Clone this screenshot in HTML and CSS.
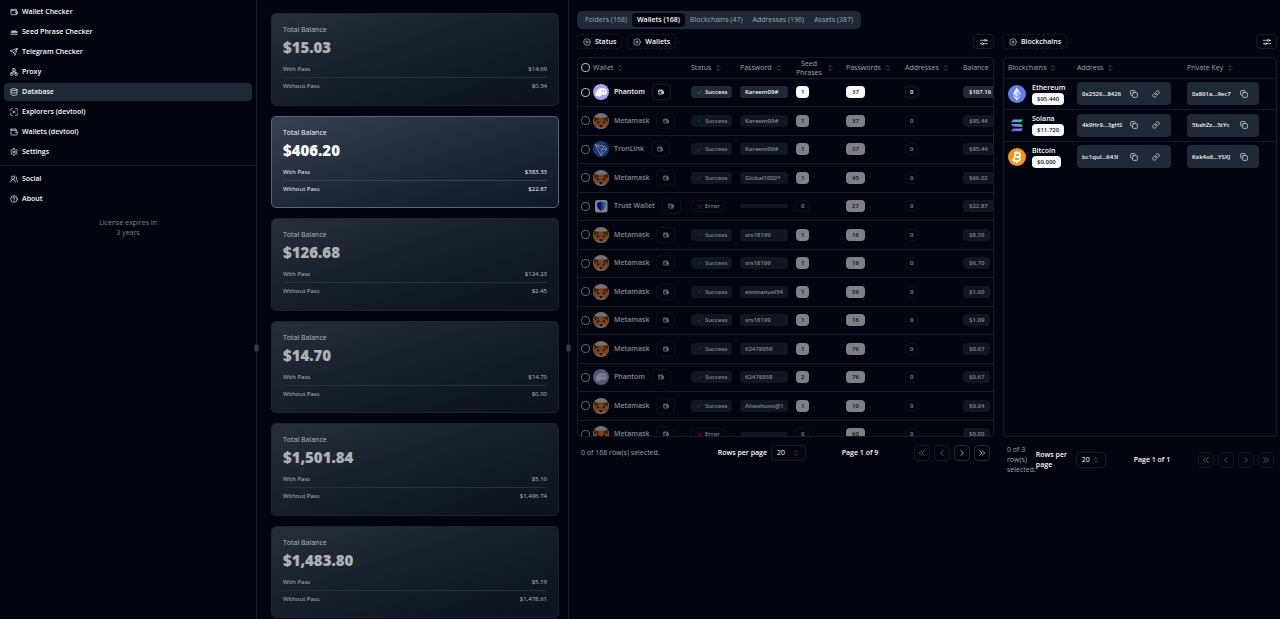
FILE: index.html
```html
<!DOCTYPE html>
<html lang="en">
<head>
<meta charset="utf-8">
<title>Database</title>
<link rel="stylesheet" href="styles.css">
</head>
<body>
<svg class="sprite" aria-hidden="true">
  <defs>
    <linearGradient id="sol-gradient" gradientUnits="userSpaceOnUse" x1="6" y1="25" x2="26" y2="6">
      <stop offset="0" stop-color="#9945ff"/><stop offset=".5" stop-color="#6a8df0"/><stop offset="1" stop-color="#14f195"/>
    </linearGradient>
  </defs>
  <symbol id="i-wallet" viewBox="0 0 24 24"><path d="M19 7V4H5a2 2 0 0 0 0 4h15v4M3 6v12a2 2 0 0 0 2 2h15v-4M22 12h-4a2 2 0 0 0 0 4h4z"/></symbol>
  <symbol id="i-wallet-box" viewBox="0 0 24 24"><path d="M3 5a2 2 0 0 1 2-2h13v4M3 5a2 2 0 0 0 2 2h14a2 2 0 0 1 2 2v10a2 2 0 0 1-2 2H5a2 2 0 0 1-2-2zM16 13h5"/></symbol>
  <symbol id="i-wallet-small" viewBox="0 0 24 24"><path d="M18 8V4H3v16h18V8H3M16 12h5v4h-5z"/></symbol>
  <symbol id="i-seed" viewBox="0 0 24 24"><path d="M2 19h20"/><circle cx="5" cy="12" r="2.5"/><circle cx="12" cy="11" r="2.5"/><circle cx="19" cy="12" r="2.5"/><path d="M9 15V8M15 15V7"/></symbol>
  <symbol id="i-send" viewBox="0 0 24 24"><path d="M22 2 15 22l-4-9-9-4zM22 2 11 13"/></symbol>
  <symbol id="i-network" viewBox="0 0 24 24"><rect x="2" y="15" width="7" height="7" rx="1"/><rect x="15" y="15" width="7" height="7" rx="1"/><rect x="8.5" y="2" width="7" height="7" rx="1"/><path d="M12 9v3M5.500 15v-3h13v3"/></symbol>
  <symbol id="i-database" viewBox="0 0 24 24"><ellipse cx="12" cy="5" rx="9" ry="3"/><path d="M3 5v14c0 1.700 4 3 9 3s9-1.300 9-3V5M3 12c0 1.700 4 3 9 3s9-1.300 9-3"/></symbol>
  <symbol id="i-scan" viewBox="0 0 24 24"><path d="M2 7V4a2 2 0 0 1 2-2h3M17 2h3a2 2 0 0 1 2 2v3M22 17v3a2 2 0 0 1-2 2h-3M7 22H4a2 2 0 0 1-2-2v-3M9 9l6 6M15 9l-6 6"/></symbol>
  <symbol id="i-gear" viewBox="0 0 24 24"><path d="M10 2h4l.7 3 2 1.200 3-.9 2 3.400L19.500 11v2l2.200 2.300-2 3.400-3-.9-2 1.200-.7 3h-4l-.7-3-2-1.200-3 .9-2-3.400L4.500 13v-2L2.300 8.700l2-3.400 3 .9 2-1.200z"/><circle cx="12" cy="12" r="3"/></symbol>
  <symbol id="i-users" viewBox="0 0 24 24"><path d="M1.500 21a7.500 7.500 0 0 1 15 0M22.500 20c0-3.400-2-6.500-4.500-8a5 5 0 0 0-.5-8.500"/><circle cx="9" cy="8" r="5"/></symbol>
  <symbol id="i-help" viewBox="0 0 24 24"><circle cx="12" cy="12" r="10"/><path d="M9 9a3 3 0 0 1 6 0c0 2-3 2.500-3 4.500M12 17v.5"/></symbol>
  <symbol id="i-plus" viewBox="0 0 24 24"><circle cx="12" cy="12" r="10"/><path d="M8 12h8M12 8v8"/></symbol>
  <symbol id="i-sliders" viewBox="0 0 24 24"><path d="M1 7h12M19 7h4M1 17h4M11 17h12"/><circle cx="16" cy="7" r="3"/><circle cx="8" cy="17" r="3"/></symbol>
  <symbol id="i-sort" viewBox="0 0 24 24"><path d="m6 8 6-6 6 6M6 16l6 6 6-6"/></symbol>
  <symbol id="i-copy" viewBox="0 0 24 24"><rect x="8" y="8" width="14" height="14" rx="2"/><path d="M4 16a2 2 0 0 1-2-2V4a2 2 0 0 1 2-2h10a2 2 0 0 1 2 2"/></symbol>
  <symbol id="i-link" viewBox="0 0 24 24"><path d="M10 13a5 5 0 0 0 7.500.5l3-3a5 5 0 0 0-7-7L11.800 5.200M14 11a5 5 0 0 0-7.500-.5l-3 3a5 5 0 0 0 7 7l1.700-1.700"/></symbol>
  <symbol id="i-check" viewBox="0 0 24 24"><path d="m3 13 5 5L21 6"/></symbol>
  <symbol id="i-cross" viewBox="0 0 24 24"><path d="m4 4 16 16M20 4 4 20"/></symbol>
  <symbol id="i-next" viewBox="0 0 24 24"><path d="m9 5 7 7-7 7"/></symbol>
  <symbol id="i-prev" viewBox="0 0 24 24"><path d="m15 5-7 7 7 7"/></symbol>
  <symbol id="i-last" viewBox="0 0 24 24"><path d="m5 5 7 7-7 7M13 5l7 7-7 7"/></symbol>
  <symbol id="i-first" viewBox="0 0 24 24"><path d="m11 5-7 7 7 7M19 5l-7 7 7 7"/></symbol>
  <symbol id="i-grip" viewBox="0 0 24 36"><path d="M8 6h1M8 18h1M8 30h1M16 6h1M16 18h1M16 30h1"/></symbol>

  <symbol id="l-phantom" viewBox="0 0 32 32"><circle cx="16" cy="16" r="16" fill="#ab9ff2"/><path d="M5 22c0-8 6-14 13-14 6 0 10 3 10 8 0 4-3 6-6 6-2 0-2-1-3-1-2 0-3 4-7 4-2 0-2-2-2-3-1 2-3 3-4 2-1 0-1-1-1-2z" fill="#fff"/><ellipse cx="19" cy="14" rx="1.300" ry="2" fill="#ab9ff2"/><ellipse cx="23.500" cy="14" rx="1.300" ry="2" fill="#ab9ff2"/></symbol>
  <symbol id="l-metamask" viewBox="0 0 32 32"><clipPath id="round"><circle cx="16" cy="16" r="16"/></clipPath><g clip-path="url(#round)"><path d="M0 0h32v32H0z" fill="#e4dedb"/><path d="m1 8 9 1h12l9-1 1 11-2 9-8-1-4 3h-4l-4-3-8 1-2-9z" fill="#f0822b"/><path d="m2 8 10 3-1 3-9 3zM30 8l-10 3 1 3 9 3z" fill="#8a431a"/><path d="m8 16 5 2-1 3-4-1zM24 16l-5 2 1 3 4-1z" fill="#2b2320"/><path d="M13 24h6l-1 4h-4z" fill="#33261f"/><path d="m5 27 7 0 2 4H6zM27 27h-7l-2 4h8z" fill="#d5bfb2"/></g></symbol>
  <symbol id="l-tron" viewBox="0 0 32 32"><circle cx="16" cy="16" r="16" fill="#2f6bea"/><path d="m4 7 19 4 5 5-12 13zM4 7l13 10-1 12M17 17l11-1M17 17l6-6" fill="none" stroke="#fff" stroke-width="2"/></symbol>
  <symbol id="l-trust" viewBox="0 0 32 32"><rect x="4" y="4" width="25" height="25" rx="5" fill="#fff"/><path d="M16.500 7 8 10c0 8 2 12 8.500 16z" fill="#0500ff"/><path d="M16.500 7 25 10c0 8-2 12-8.500 16z" fill="#1668f2"/><path d="M20 8.300 25 10c0 5-1 9-4 12z" fill="#38f0a0"/></symbol>
  <symbol id="l-eth" viewBox="0 0 32 32"><circle cx="16" cy="16" r="16" fill="#627eea"/><path d="M16 4 8.500 16.500 16 13z" fill="#fff"/><path d="m16 4 7.500 12.500L16 13z" fill="#c9d3fa"/><path d="m8.500 16.500 7.500 4.300V13z" fill="#d7defb"/><path d="m23.500 16.500-7.500 4.300V13z" fill="#a3b3f4"/><path d="m8.500 18.200 7.500 10v-5.700z" fill="#fff"/><path d="m23.500 18.200-7.500 10v-5.700z" fill="#c9d3fa"/></symbol>
  <symbol id="l-sol" viewBox="0 0 32 32"><circle cx="16" cy="16" r="16" fill="#000"/><g fill="url(#sol-gradient)"><path d="M9 6h18l-4 5H5z"/><path d="M5 14h18l4 5H9z"/><path d="M9 22h18l-4 5H5z"/></g></symbol>
  <symbol id="l-btc" viewBox="0 0 32 32"><circle cx="16" cy="16" r="16" fill="#f7931a"/><g transform="rotate(14 16 16)" fill="none" stroke="#fff" stroke-width="3"><path d="M12 9v14M9 9h8.500a3.300 3.300 0 0 1 0 6.700H12h6.500a3.600 3.600 0 0 1 0 7.300H9"/><path d="M13.500 5v4M18 5v4M13.500 23v4M18 23v4" stroke-width="2"/></g></symbol>
</svg>

<div class="app">
  <aside class="sidebar">
    <nav class="nav" aria-label="Main">
      <a class="nav-link" href="#"><svg class="icon"><use href="#i-wallet"/></svg>Wallet Checker</a>
      <a class="nav-link" href="#"><svg class="icon"><use href="#i-seed"/></svg>Seed Phrase Checker</a>
      <a class="nav-link" href="#"><svg class="icon"><use href="#i-send"/></svg>Telegram Checker</a>
      <a class="nav-link" href="#"><svg class="icon"><use href="#i-network"/></svg>Proxy</a>
      <a class="nav-link active" href="#" aria-current="page"><svg class="icon"><use href="#i-database"/></svg>Database</a>
      <a class="nav-link" href="#"><svg class="icon"><use href="#i-scan"/></svg>Explorers (devtool)</a>
      <a class="nav-link" href="#"><svg class="icon"><use href="#i-wallet-box"/></svg>Wallets (devtool)</a>
      <a class="nav-link" href="#"><svg class="icon"><use href="#i-gear"/></svg>Settings</a>
    </nav>
    <nav class="nav nav-secondary" aria-label="Secondary">
      <a class="nav-link" href="#"><svg class="icon"><use href="#i-users"/></svg>Social</a>
      <a class="nav-link" href="#"><svg class="icon"><use href="#i-help"/></svg>About</a>
    </nav>
    <p class="license">License expires in<br>3 years</p>
    <span class="handle"><svg class="icon"><use href="#i-grip"/></svg></span>
  </aside>

  <section class="balances">
    <div class="card-list" id="cards"></div>
    <span class="handle"><svg class="icon"><use href="#i-grip"/></svg></span>
  </section>

  <main class="main">
    <div class="tabs" role="tablist">
      <button class="tab" role="tab">Folders (168)</button>
      <button class="tab active" role="tab" aria-selected="true">Wallets (168)</button>
      <button class="tab" role="tab">Blockchains (47)</button>
      <button class="tab" role="tab">Addresses (196)</button>
      <button class="tab" role="tab">Assets (387)</button>
    </div>
    <div class="panes">
      <section class="pane">
        <div class="toolbar">
          <button class="filter"><svg class="icon"><use href="#i-plus"/></svg>Status</button>
          <button class="filter"><svg class="icon"><use href="#i-plus"/></svg>Wallets</button>
          <button class="view-options" aria-label="View options"><svg class="icon"><use href="#i-sliders"/></svg></button>
        </div>
        <div class="table-box">
          <table class="grid">
            <colgroup><col class="c-select"><col class="c-wallet"><col class="c-status"><col class="c-password"><col class="c-seed"><col class="c-passwords"><col class="c-addresses"><col class="c-balance"></colgroup>
            <thead>
              <tr>
                <th class="select-cell"><input class="tick" type="checkbox" aria-label="Select all"></th>
                <th><span class="head">Wallet<svg class="icon sort"><use href="#i-sort"/></svg></span></th>
                <th><span class="head">Status<svg class="icon sort"><use href="#i-sort"/></svg></span></th>
                <th><span class="head">Password<svg class="icon sort"><use href="#i-sort"/></svg></span></th>
                <th><span class="head head-wrap">Seed<br>Phrases<svg class="icon sort"><use href="#i-sort"/></svg></span></th>
                <th><span class="head">Passwords<svg class="icon sort"><use href="#i-sort"/></svg></span></th>
                <th><span class="head">Addresses<svg class="icon sort"><use href="#i-sort"/></svg></span></th>
                <th><span class="head">Balance</span></th>
              </tr>
            </thead>
            <tbody id="wallets"></tbody>
          </table>
        </div>
        <footer class="pager">
          <p class="selected">0 of 168 row(s) selected.</p>
          <label class="per-page" for="rows-a">Rows per page</label>
          <span class="select-wrap"><select class="select" id="rows-a"><option>20</option></select><svg class="icon sort"><use href="#i-sort"/></svg></span>
          <p class="page-no">Page 1 of 9</p>
          <div class="page-buttons">
            <button class="page-btn" disabled aria-label="First page"><svg class="icon"><use href="#i-first"/></svg></button>
            <button class="page-btn" disabled aria-label="Previous page"><svg class="icon"><use href="#i-prev"/></svg></button>
            <button class="page-btn" aria-label="Next page"><svg class="icon"><use href="#i-next"/></svg></button>
            <button class="page-btn" aria-label="Last page"><svg class="icon"><use href="#i-last"/></svg></button>
          </div>
        </footer>
      </section>

      <section class="pane">
        <div class="toolbar">
          <button class="filter"><svg class="icon"><use href="#i-plus"/></svg>Blockchains</button>
          <button class="view-options" aria-label="View options"><svg class="icon"><use href="#i-sliders"/></svg></button>
        </div>
        <div class="table-box">
          <table class="grid chains">
            <colgroup><col class="c-chain"><col class="c-address"><col class="c-key"></colgroup>
            <thead>
              <tr>
                <th><span class="head">Blockchains<svg class="icon sort"><use href="#i-sort"/></svg></span></th>
                <th><span class="head">Address<svg class="icon sort"><use href="#i-sort"/></svg></span></th>
                <th><span class="head">Private Key<svg class="icon sort"><use href="#i-sort"/></svg></span></th>
              </tr>
            </thead>
            <tbody id="chains"></tbody>
          </table>
        </div>
        <footer class="pager narrow">
          <p class="selected">0 of 3 row(s) selected.</p>
          <label class="per-page" for="rows-b">Rows per page</label>
          <span class="select-wrap"><select class="select" id="rows-b"><option>20</option></select><svg class="icon sort"><use href="#i-sort"/></svg></span>
          <p class="page-no">Page 1 of 1</p>
          <div class="page-buttons">
            <button class="page-btn" disabled aria-label="First page"><svg class="icon"><use href="#i-first"/></svg></button>
            <button class="page-btn" disabled aria-label="Previous page"><svg class="icon"><use href="#i-prev"/></svg></button>
            <button class="page-btn" disabled aria-label="Next page"><svg class="icon"><use href="#i-next"/></svg></button>
            <button class="page-btn" disabled aria-label="Last page"><svg class="icon"><use href="#i-last"/></svg></button>
          </div>
        </footer>
      </section>
    </div>
  </main>
</div>
<script src="app.js"></script>
</body>
</html>
```
FILE: styles.css
```css
:root {
  --bg: #02050f;
  --muted: #1f2937;
  --line: #151c29;
  --text: #f9fafb;
  --soft: #9ca3af;
  --dim: #6b7280;
}

* { box-sizing: border-box; }

body {
  margin: 0;
  background: var(--bg);
  color: var(--text);
  font: 500 7px/10px "Open Sans", "Noto Sans", sans-serif;
}

p { margin: 0; }
button, select { font: inherit; color: inherit; cursor: pointer; }
button { padding: 0; border: 0; background: none; }

.sprite { position: absolute; width: 0; height: 0; }

.icon {
  flex: none;
  width: 8px;
  height: 8px;
  fill: none;
  stroke: currentColor;
  stroke-width: 2;
  stroke-linecap: round;
  stroke-linejoin: round;
}
.logo { flex: none; width: 16px; height: 16px; }

.app {
  display: grid;
  grid-template-columns: 257fr 312fr 711fr;
  height: 100vh;
  overflow: hidden;
}

/* Sidebar */
.sidebar, .balances {
  position: relative;
  min-width: 0;
  border-right: 1px solid var(--line);
}
.nav { display: flex; flex-direction: column; gap: 2px; padding: 3px 4px; }
.nav-secondary { margin-top: 1px; padding-top: 4px; border-top: 1px solid var(--line); }
.nav-link {
  display: flex;
  align-items: center;
  gap: 4px;
  height: 18px;
  padding: 0 6px;
  border-radius: 4px;
  color: var(--text);
  font-weight: 600;
  text-decoration: none;
}
.nav-link.active { background: var(--muted); }
.license { margin-top: 7px; text-align: center; color: #7b8290; font-weight: 400; }
.handle {
  position: absolute;
  top: 55.5%;
  right: -3px;
  display: flex;
  z-index: 1;
  padding: 1px 0;
  border-radius: 2px;
  background: var(--muted);
  color: var(--soft);
}
.handle .icon { width: 5px; height: 6px; stroke-width: 3; }

/* Balance cards */
.card-list {
  display: grid;
  grid-auto-rows: 1fr;
  gap: 10px;
  height: 100%;
  padding: 13px 9px 1px 14px;
}
.card {
  padding: 10px 11px;
  border: 1px solid #263040;
  border-radius: 5px;
  background: linear-gradient(to bottom right, #374151, #1f2937 50%, #111827);
  opacity: .7;
}
.card.active { border-color: #5b6472; opacity: 1; }
.card-title { line-height: 12px; }
.card-total { font-size: 15px; line-height: 22px; font-weight: 800; }
.card-row {
  display: flex;
  justify-content: space-between;
  padding: 2px 0;
  font-size: 6px;
  line-height: 12px;
}
.card-total + .card-row { margin-top: 3px; border-bottom: 1px solid #374151; }

/* Main area */
.main { min-width: 0; padding: 11px 3px 0 8px; }
.tabs {
  display: inline-flex;
  padding: 2px 3px;
  border-radius: 5px;
  background: var(--muted);
  vertical-align: top;
}
.tab { height: 14px; padding: 0 5px; border-radius: 4px; color: var(--soft); }
.tab.active { background: var(--bg); color: var(--text); font-weight: 600; }

.panes { display: grid; grid-template-columns: 417fr 274fr; gap: 9px; padding-top: 5px; }
.pane { min-width: 0; }
.toolbar { display: flex; gap: 5px; height: 15px; }
.filter {
  display: flex;
  align-items: center;
  gap: 4px;
  padding: 0 5px;
  border: 1px dashed var(--line);
  border-radius: 4px;
  font-weight: 600;
}
.filter .icon { color: #c3c7ce; }
.view-options {
  display: grid;
  place-items: center;
  width: 21px;
  margin-left: auto;
  border: 1px solid var(--line);
  border-radius: 4px;
}

.table-box {
  height: calc(100vh - 239px);
  margin-top: 8px;
  border: 1px solid var(--line);
  border-radius: 4px;
  overflow: hidden;
}
.grid { width: 100%; table-layout: fixed; border-collapse: collapse; }
.grid th, .grid td { padding: 0; border-bottom: 1px solid var(--line); text-align: left; }
.grid th { height: 20px; color: var(--soft); font-weight: 500; }
.grid td { height: 28px; }
.grid tr:nth-child(even) td { height: 29px; }
.grid .select-cell { padding-left: 3px; }
.c-select { width: 15px; }
.c-wallet { width: 98px; }
.c-status { width: 49px; }
.c-password { width: 56px; }
.c-seed { width: 50px; }
.c-passwords { width: 59px; }
.c-addresses { width: 58px; }
.c-balance { width: 31px; }
.head { position: relative; display: inline-flex; align-items: center; gap: 4px; }
.head-wrap { display: inline-block; text-align: center; line-height: 9px; vertical-align: middle; }
.sort { width: 6px; height: 6px; color: #8a909c; }
.head-wrap .sort { position: absolute; left: 100%; top: 6px; margin-left: 5px; }

.tick {
  display: block;
  appearance: none;
  width: 9px;
  height: 9px;
  margin: 0;
  border: 1px solid #b6bac2;
  border-radius: 4px;
}
.dimmed td > * { opacity: .5; }

.wallet { display: flex; align-items: center; gap: 5px; font-weight: 600; }
.wallet-btn {
  display: grid;
  place-items: center;
  width: 19px;
  height: 16px;
  margin-left: 2px;
  border: 1px solid var(--line);
  border-radius: 4px;
}
.wallet-btn .icon { width: 6px; height: 6px; stroke-width: 3; }

.badge {
  display: inline-flex;
  align-items: center;
  padding: 1px 5px;
  border: 1px solid transparent;
  border-radius: 4px;
  font-size: 6px;
  line-height: 8px;
  font-weight: 600;
  white-space: nowrap;
  vertical-align: middle;
}
.badge.fill { background: var(--muted); }
.badge.light { background: var(--text); color: #111827; font-weight: 600; }
.badge.outline { border-color: var(--line); }
.badge.status { gap: 3px; padding: 1px 4px 1px 5px; }
.badge.count { padding: 1px 4px; }
.badge.secret { width: 48px; padding: 1px 4px; }
.badge .icon { width: 5px; height: 5px; stroke-width: 4; }
.ok { color: #16a34a; }
.bad { color: #ef2020; }

/* Blockchain table */
.c-chain { width: 73px; }
.c-address { width: 110px; }
.c-key { width: 91px; }
.grid.chains td { height: 31px; }
.grid.chains tr:nth-child(even) td { height: 32px; }
.grid.chains tbody tr:last-child td { border-bottom: 0; }
.grid.chains th:first-child, .grid.chains td:first-child { padding-left: 4px; }
.chain { display: flex; align-items: center; gap: 6px; }
.chain .logo { width: 18px; height: 18px; }
.chain-name { line-height: 10px; font-weight: 600; }
.chain .badge { display: flex; width: fit-content; padding: 1px 4px; }
.key-box {
  display: flex;
  align-items: center;
  width: fit-content;
  height: 23px;
  padding: 0 11px 0 5px;
  border-radius: 4px;
  background: var(--muted);
  font-size: 6px;
  font-weight: 600;
}
.key-text { width: 48px; }
.key-box button { display: flex; }
.key-box button + button { margin-left: 14px; }

/* Pager */
.pager { display: flex; align-items: center; padding: 8px 4px 0; }
.selected { flex: 1; color: var(--soft); font-weight: 400; }
.per-page { font-weight: 600; }
.select-wrap { display: grid; align-items: center; margin-left: 4px; }
.select-wrap > * { grid-area: 1 / 1; }
.select-wrap .sort { justify-self: end; margin-right: 7px; pointer-events: none; }
.select {
  width: 35px;
  height: 16px;
  padding: 0 5px;
  border: 1px solid var(--line);
  border-radius: 4px;
  background: var(--bg);
  appearance: none;
}
.page-no { width: 108px; text-align: center; font-weight: 600; }
.page-buttons { display: flex; gap: 4px; }
.page-btn {
  display: grid;
  place-items: center;
  width: 16px;
  height: 16px;
  border: 1px solid var(--muted);
  border-radius: 4px;
}
.page-btn:disabled { opacity: .5; }
.narrow { padding-right: 3px; }
.narrow .selected { flex: 0 0 28px; }
.narrow .per-page { width: 36px; }
.narrow .select { width: 30px; }
.narrow .page-no { flex: 1; width: auto; }
```
FILE: app.js
```js
const icon = (name, cls = "") => `<svg class="icon ${cls}"><use href="#i-${name}"/></svg>`;
const logo = (name) => `<svg class="logo"><use href="#l-${name}"/></svg>`;

const cards = [
  ["$15.03", "$14.69", "$0.34"],
  ["$406.20", "$383.33", "$22.87"],
  ["$126.68", "$124.23", "$2.45"],
  ["$14.70", "$14.70", "$0.00"],
  ["$1,501.84", "$5.10", "$1,496.74"],
  ["$1,483.80", "$5.19", "$1,478.61"],
];

document.getElementById("cards").innerHTML = cards.map(([total, withPass, without], i) => `
  <article class="card ${i === 1 ? "active" : ""}">
    <div class="card-title">Total Balance</div>
    <div class="card-total">${total}</div>
    <div class="card-row"><span>With Pass</span><span>${withPass}</span></div>
    <div class="card-row"><span>Without Pass</span><span>${without}</span></div>
  </article>`).join("");

const logos = { Phantom: "phantom", Metamask: "metamask", TronLink: "tron", "Trust Wallet": "trust" };

// name, password, seed phrases, passwords, balance
const wallets = [
  ["Phantom", "Kareem09#", 1, 37, "$107.16"],
  ["Metamask", "Kareem09#", 1, 37, "$95.44"],
  ["TronLink", "Kareem09#", 1, 37, "$95.44"],
  ["Metamask", "Global1002*", 1, 45, "$66.02"],
  ["Trust Wallet", "", 0, 27, "$22.87"],
  ["Metamask", "srs18199", 1, 16, "$8.50"],
  ["Metamask", "srs18199", 1, 16, "$6.70"],
  ["Metamask", "emmanuel54", 1, 59, "$1.60"],
  ["Metamask", "srs18199", 1, 16, "$1.09"],
  ["Metamask", "62478958", 1, 76, "$0.67"],
  ["Phantom", "62478958", 2, 76, "$0.67"],
  ["Metamask", "Alveshuvo@1", 1, 10, "$0.04"],
  ["Metamask", "", 0, 60, "$0.00"],
];

document.getElementById("wallets").innerHTML = wallets.map(([name, pass, seeds, passwords, balance], i) => `
  <tr class="${i ? "dimmed" : ""}">
    <td class="select-cell"><input class="tick" type="checkbox" aria-label="Select ${name}"></td>
    <td><div class="wallet">${logo(logos[name])}${name}<button class="wallet-btn" aria-label="Open ${name}">${icon("wallet-small")}</button></div></td>
    <td>${pass
      ? `<span class="badge status fill">${icon("check", "ok")}Success</span>`
      : `<span class="badge status outline">${icon("cross", "bad")}Error</span>`}</td>
    <td><span class="badge secret fill">${pass}</span></td>
    <td><span class="badge count ${seeds ? "light" : "outline"}">${seeds}</span></td>
    <td><span class="badge light">${passwords}</span></td>
    <td><span class="badge count outline">0</span></td>
    <td><span class="badge fill">${balance}</span></td>
  </tr>`).join("");

const chains = [
  ["eth", "Ethereum", "$95.440", "0x2526...8426", "0x861a...9ec7"],
  ["sol", "Solana", "$11.720", "4k9Hr9...3gHS", "5bshZz...5tYc"],
  ["btc", "Bitcoin", "$0.000", "bc1qul...643l", "Kxk4o6...YSXJ"],
];

const copy = `<button aria-label="Copy">${icon("copy")}</button>`;
const open = `<button aria-label="Open in explorer">${icon("link")}</button>`;

document.getElementById("chains").innerHTML = chains.map(([id, name, sum, address, key]) => `
  <tr>
    <td><div class="chain">${logo(id)}<div><div class="chain-name">${name}</div><span class="badge light">${sum}</span></div></div></td>
    <td><div class="key-box"><span class="key-text">${address}</span>${copy}${open}</div></td>
    <td><div class="key-box"><span class="key-text">${key}</span>${copy}</div></td>
  </tr>`).join("");
```
